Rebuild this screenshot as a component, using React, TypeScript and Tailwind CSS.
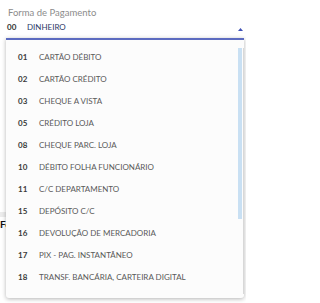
const items = [
  { code: '01', name: 'CARTÃO DÉBITO' },
  { code: '02', name: 'CARTÃO CRÉDITO' },
  { code: '03', name: 'CHEQUE A VISTA' },
  { code: '05', name: 'CRÉDITO LOJA' },
  { code: '08', name: 'CHEQUE PARC. LOJA' },
  { code: '10', name: 'DÉBITO FOLHA FUNCIONÁRIO' },
  { code: '11', name: 'C/C DEPARTAMENTO' },
  { code: '15', name: 'DEPÓSITO C/C' },
  { code: '16', name: 'DEVOLUÇÃO DE MERCADORIA' },
  { code: '17', name: 'PIX - PAG. INSTANTÂNEO' },
  { code: '18', name: 'TRANSF. BANCÁRIA, CARTEIRA DIGITAL' },
];

export default function App() {
  return (
    <div
      className="relative w-[246px] h-[303px] overflow-hidden bg-white"
      style={{ fontFamily: 'Lato, "Noto Sans", sans-serif' }}
    >
      {/* Field header */}
      <div className="pl-2 pr-[3px] pt-[6px]">
        <div className="text-[9.5px] leading-[13px] text-[#8c8c8c]">Forma de Pagamento</div>
        <div className="flex items-center mt-[2px] h-[12px]">
          <span className="text-[8px] font-bold text-[#333] w-[20px] -ml-[1px]">00</span>
          <span className="text-[8px] text-[#2b3a67]">DINHEIRO</span>
          <svg className="ml-auto mt-[4px]" width="5" height="3" viewBox="0 0 5 3">
            <path d="M2.5 0 L5 3 L0 3 Z" fill="#3f51b5" />
          </svg>
        </div>
      </div>

      {/* Content behind the dropdown */}
      <div className="mt-[179px] w-[6px] h-[5px] bg-[#ececec]" />
      <div className="mt-[2px] text-[10px] font-bold text-[#111] leading-none">Fo</div>

      {/* Dropdown panel */}
      <div className="absolute left-[6px] top-[38px] w-[238px] h-[260px] flex bg-[#fcfcfc] border-t-2 border-[#5c6bc0] rounded-b-[3px] shadow-[0_1px_4px_rgba(0,0,0,0.3)]">
        <ul className="flex-1 pt-[6px]">
          {items.map((it) => (
            <li key={it.code} className="flex items-center h-[22px] pl-[12px]">
              <span className="w-[21px] text-[8px] font-bold text-[#3a3a3a]">{it.code}</span>
              <span className="text-[8px] text-[#5a5a5a] whitespace-nowrap">{it.name}</span>
            </li>
          ))}
        </ul>
        {/* scrollbar */}
        <div className="w-[6px] pt-[8px] pb-[4px] flex justify-start">
          <div className="w-[4px] h-[171px] bg-[#c9e0f3]" />
          <div className="ml-auto w-[1px] h-full bg-[#d8d8d8]" />
        </div>
      </div>
    </div>
  );
}
